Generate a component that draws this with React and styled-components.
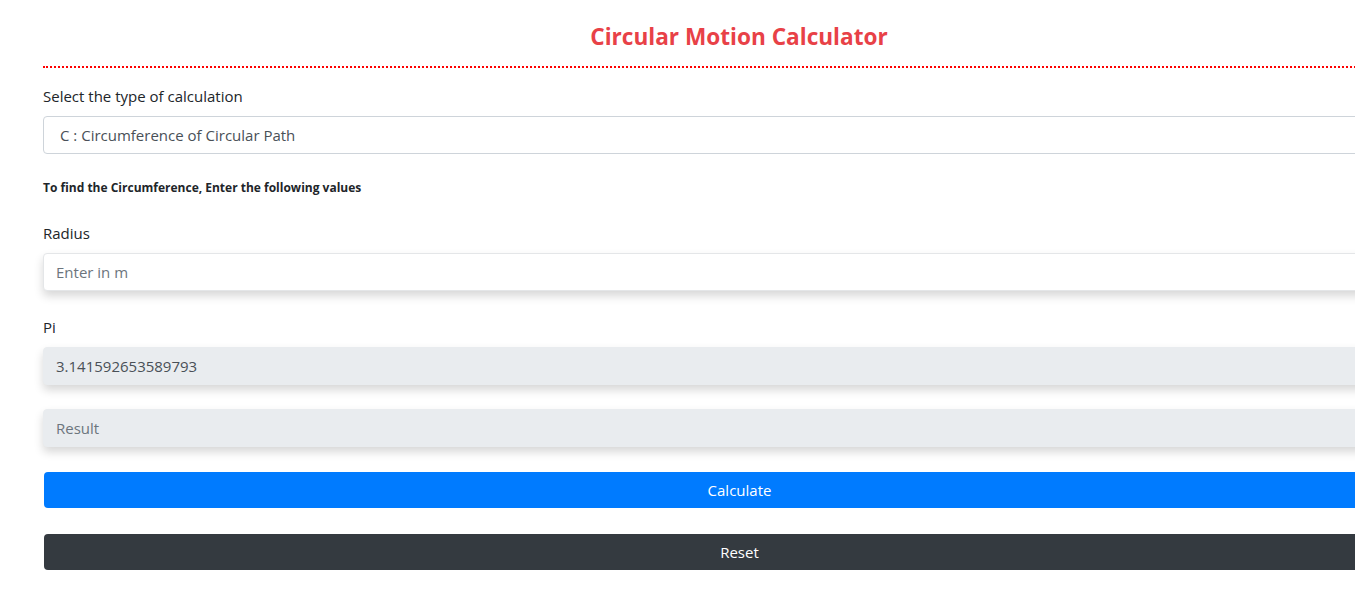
import React, { useState } from 'react'
import styled, { createGlobalStyle } from 'styled-components'

const GlobalStyle = createGlobalStyle`
  body {
    margin: 0;
    background: #fff;
    font-family: "Open Sans", "Noto Sans", sans-serif;
    color: #212529;
  }
`;

const Page = styled.div`
  display: flex;
  flex-direction: column;
  padding: 0 0 30px 43px;
  width: 1392px;
`;

const Title = styled.h2`
  margin: 22px 0 0;
  padding-bottom: 15px;
  border-bottom: 2px dotted #ff0000;
  text-align: center;
  font-size: 22.6px;
  line-height: 29px;
  font-weight: 700;
  color: #e84147;
`;

const Field = styled.div`
  display: flex;
  flex-direction: column;
  margin-top: ${({ $top }) => $top || 0}px;
`;

const Label = styled.label`
  font-size: 15px;
  line-height: 24px;
  margin-bottom: 8px;
`;

const Select = styled.select`
  height: 38px;
  border: 1px solid #ced4da;
  border-radius: 4px;
  padding: 0 16px;
  font-family: inherit;
  font-size: 15px;
  color: #495057;
  background: #fff;
  appearance: none;
  outline: none;
`;

const Hint = styled.h6`
  margin: 25px 0 0;
  font-size: 12px;
  line-height: 18px;
  font-weight: 700;
`;

const Input = styled.input`
  box-sizing: border-box;
  height: 38px;
  border: 1px solid ${({ readOnly }) => (readOnly ? '#e9ecef' : '#e4e6e8')};
  border-radius: 4px;
  padding: 0 12px;
  font-family: inherit;
  font-size: 15px;
  color: #495057;
  background: ${({ readOnly }) => (readOnly ? '#e9ecef' : '#fff')};
  box-shadow: 0 5px 10px rgba(0, 0, 0, 0.16);
  outline: none;
  &::placeholder {
    color: #6c757d;
  }
`;

const Button = styled.button`
  display: block;
  width: calc(100% - 1px);
  margin-left: 1px;
  height: 36px;
  margin-top: ${({ $top }) => $top}px;
  border: none;
  border-radius: 4px;
  background: ${({ $dark }) => ($dark ? '#343a40' : '#007bff')};
  color: #fff;
  font-family: inherit;
  font-size: 15px;
  cursor: pointer;
`;

const App = () => {
  const [radius, setRadius] = useState('')
  const [result, setResult] = useState('')

  return (
    <Page>
      <GlobalStyle />
      <Title>Circular Motion Calculator</Title>
      <Field $top={16}>
        <Label>Select the type of calculation</Label>
        <Select defaultValue="c">
          <option value="c">C : Circumference of Circular Path</option>
        </Select>
      </Field>
      <Hint>To find the Circumference, Enter the following values</Hint>
      <Field $top={24}>
        <Label>Radius</Label>
        <Input placeholder="Enter in m" value={radius} onChange={(e) => setRadius(e.target.value)} />
      </Field>
      <Field $top={24}>
        <Label>Pi</Label>
        <Input readOnly value={String(Math.PI)} />
      </Field>
      <Field $top={24}>
        <Input readOnly placeholder="Result" value={result} />
      </Field>
      <Button $top={25} onClick={() => setResult(radius ? String(2 * Math.PI * Number(radius)) : '')}>
        Calculate
      </Button>
      <Button $dark $top={26} onClick={() => { setRadius(''); setResult('') }}>
        Reset
      </Button>
    </Page>
  )
}

export default App
